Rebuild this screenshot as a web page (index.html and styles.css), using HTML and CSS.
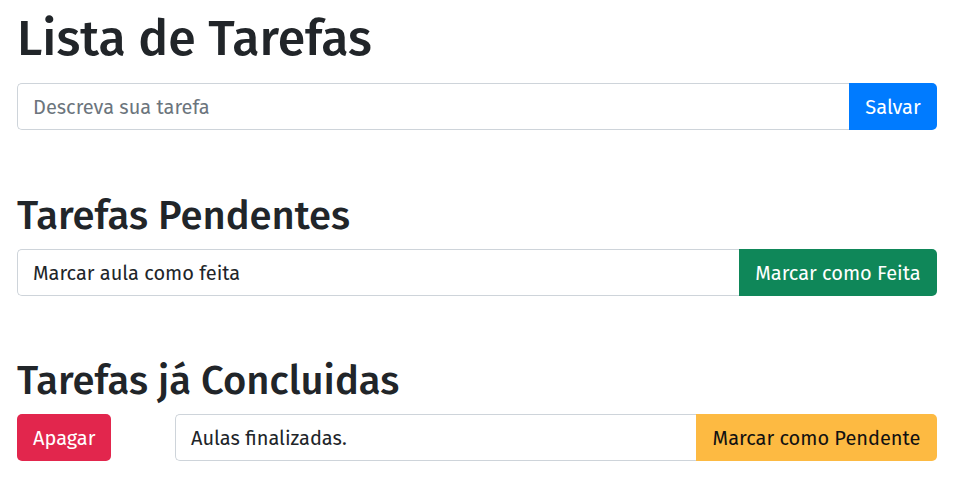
FILE: index.html
```html
<!DOCTYPE html>
<html lang="pt-BR">
<head>
<meta charset="utf-8">
<title>Lista de Tarefas</title>
<link rel="stylesheet" href="styles.css">
</head>
<body>
<main class="page">
  <h1 class="title">Lista de Tarefas</h1>
  <form class="group">
    <input class="field" type="text" placeholder="Descreva sua tarefa">
    <button class="btn btn-primary" type="button">Salvar</button>
  </form>

  <h2 class="section">Tarefas Pendentes</h2>
  <div class="group">
    <div class="field">Marcar aula como feita</div>
    <button class="btn btn-success" type="button">Marcar como Feita</button>
  </div>

  <h2 class="section section-last">Tarefas já Concluidas</h2>
  <div class="done-row">
    <button class="btn btn-danger btn-solo" type="button">Apagar</button>
    <div class="group group-grow">
      <div class="field">Aulas finalizadas.</div>
      <button class="btn btn-warning" type="button">Marcar como Pendente</button>
    </div>
  </div>
</main>
</body>
</html>
```

FILE: styles.css
```css
* { box-sizing: border-box; }
html, body { margin: 0; background: #fff; }
body {
  font-family: "Fira Sans", "Noto Sans", "Open Sans", sans-serif;
  color: #212529;
  font-size: 20px;
}
.page {
  width: 937px;
  padding: 0 0 0 17px;
}
.title {
  margin: 8px 0 15px;
  font-size: 50px;
  line-height: 60px;
  font-weight: 500;
}
.section {
  margin: 61px 0 8px;
  font-size: 40px;
  line-height: 50px;
  font-weight: 500;
}
.section-last { margin-top: 60px; }
.group {
  display: flex;
  height: 47px;
  margin: 0;
}
.group-grow { flex: 1; }
.field {
  flex: 1;
  min-width: 0;
  height: 100%;
  border: 1px solid #ced4da;
  border-right: 0;
  border-radius: 5px 0 0 5px;
  padding: 0 15px;
  font: inherit;
  font-size: 20px;
  color: #212529;
  display: flex;
  align-items: center;
  outline: none;
}
.field::placeholder { color: #6c757d; }
.btn {
  height: 100%;
  border: 0;
  border-radius: 0 5px 5px 0;
  padding: 0 16px;
  font: inherit;
  font-size: 20px;
  color: #fff;
  white-space: nowrap;
}
.btn-primary { background: #007bff; width: 88px; }
.btn-success { background: #0f8759; width: 198px; }
.btn-warning { background: #fdba42; color: #111; width: 241px; }
.btn-danger { background: #e2264d; }
.btn-solo {
  border-radius: 5px;
  width: 94px;
}
.done-row {
  display: flex;
  gap: 64px;
  height: 47px;
}
```
